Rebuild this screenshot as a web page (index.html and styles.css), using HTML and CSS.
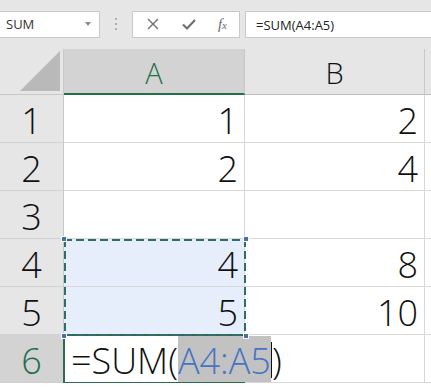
FILE: index.html
```html
<!DOCTYPE html>
<html lang="en">

<head>
    <meta charset="UTF-8">
    <meta name="viewport" content="width=device-width, initial-scale=1.0">
    <title>SUM</title>
    <link rel="stylesheet" href="styles.css">
</head>

<body>
    <div class="toolbar">
        <div class="name-box">
            <span>SUM</span>
            <span class="drop-arrow"></span>
        </div>
        <div class="grip">
            <span></span><span></span><span></span>
        </div>
        <div class="fx-box">
            <svg class="icon" width="14" height="14" viewBox="0 0 14 14">
                <path d="M2 2 L12 12 M12 2 L2 12" stroke="#707070" stroke-width="1.4" fill="none" />
            </svg>
            <svg class="icon" width="16" height="14" viewBox="0 0 16 14">
                <path d="M2 7.5 L6 11.5 L14 3" stroke="#707070" stroke-width="2.2" fill="none" />
            </svg>
            <span class="fx">f<small>x</small></span>
        </div>
        <div class="formula-box">=SUM(A4:A5)</div>
    </div>

    <div class="sheet">
        <div class="corner"><span class="triangle"></span></div>
        <div class="col-head col-active">A</div>
        <div class="col-head">B</div>
        <div class="col-head col-rest"></div>

        <div class="row-head">1</div>
        <div class="cell">1</div>
        <div class="cell">2</div>
        <div class="cell rest"></div>

        <div class="row-head">2</div>
        <div class="cell">2</div>
        <div class="cell">4</div>
        <div class="cell rest"></div>

        <div class="row-head">3</div>
        <div class="cell"></div>
        <div class="cell"></div>
        <div class="cell rest"></div>

        <div class="row-head">4</div>
        <div class="cell picked">4</div>
        <div class="cell">8</div>
        <div class="cell rest"></div>

        <div class="row-head">5</div>
        <div class="cell picked">5</div>
        <div class="cell">10</div>
        <div class="cell rest"></div>

        <div class="row-head row-active">6</div>
        <div class="cell editing">
            <span>=SUM(</span><span class="ref">A4:A5</span><span class="caret"></span><span>)</span>
        </div>
        <div class="cell"></div>
        <div class="cell rest"></div>

        <!-- copy marquee around A4:A5 -->
        <div class="marquee">
            <span class="handle tl"></span>
            <span class="handle tr"></span>
            <span class="handle bl"></span>
            <span class="handle br"></span>
        </div>
    </div>
</body>

</html>
```

FILE: styles.css
```css
* {
    box-sizing: border-box;
}

body {
    margin: 0;
    font-family: 'Open Sans', 'Noto Sans', sans-serif;
    background: white;
    color: #111;
    overflow: hidden;
}

/* formula bar */
.toolbar {
    display: flex;
    align-items: center;
    height: 49px;
    padding-bottom: 1px;
    background-color: #e6e6e6;
}

.name-box {
    display: flex;
    align-items: center;
    justify-content: space-between;
    width: 100px;
    height: 27px;
    padding: 0 8px 0 6px;
    background: white;
    border: 1px solid #c9c9c9;
    border-left: none;
    font-size: 13px;
    color: #333;
}

.drop-arrow {
    width: 0;
    height: 0;
    border-left: 3.5px solid transparent;
    border-right: 3.5px solid transparent;
    border-top: 4px solid #8a8a8a;
}

.grip {
    display: flex;
    flex-direction: column;
    gap: 3px;
    width: 32px;
    align-items: center;
}

.grip span {
    width: 2px;
    height: 2px;
    background-color: #b0b0b0;
}

.fx-box {
    display: flex;
    align-items: center;
    justify-content: space-between;
    width: 108px;
    height: 27px;
    padding: 0 12px 0 13px;
    background: white;
    border: 1px solid #c9c9c9;
}

.icon {
    display: block;
}

.fx {
    font-family: 'Liberation Serif', serif;
    font-style: italic;
    font-size: 15px;
    color: #6b6b6b;
}

.fx small {
    font-size: 11px;
}

.formula-box {
    flex: 1;
    height: 27px;
    margin-left: 5px;
    padding: 4px 10px;
    background: white;
    border: 1px solid #c9c9c9;
    border-right: none;
    font-size: 13px;
    color: #222;
}

/* grid */
.sheet {
    position: relative;
    display: grid;
    grid-template-columns: 64px 181px 180px 1fr;
    grid-template-rows: 46px repeat(6, 48px);
    font-weight: 350;
}

.corner {
    display: flex;
    align-items: flex-end;
    justify-content: flex-end;
    padding: 0 3px 3px 0;
    background-color: #e6e6e6;
    border-right: 1px solid #c8c8c8;
    border-bottom: 1px solid #c8c8c8;
}

.triangle {
    width: 0;
    height: 0;
    border-left: 40px solid transparent;
    border-bottom: 40px solid #b9b9b9;
}

.col-head {
    display: flex;
    align-items: center;
    justify-content: center;
    padding-top: 2px;
    background-color: #e6e6e6;
    border-right: 1px solid #c8c8c8;
    border-bottom: 1px solid #bcbcbc;
    font-size: 29px;
    color: #111;
}

.col-active {
    background-color: #d3d3d3;
    color: #21704a;
    border-bottom: 2px solid #21704a;
}

.col-rest {
    border-right: none;
}

.row-head {
    display: flex;
    align-items: center;
    justify-content: center;
    padding-top: 4px;
    background-color: #e6e6e6;
    border-right: 1px solid #c8c8c8;
    border-bottom: 1px solid #d0d0d0;
    font-size: 36px;
    color: #111;
}

.row-active {
    background-color: #d3d3d3;
    color: #21704a;
}

.cell {
    display: flex;
    align-items: center;
    justify-content: flex-end;
    padding: 4px 6px 0 0;
    border-right: 1px solid #d8d8d8;
    border-bottom: 1px solid #d8d8d8;
    font-size: 36px;
    color: #111;
}

.cell.rest {
    border-right: none;
}

.cell.picked {
    background-color: #e6edfb;
}

.editing {
    justify-content: flex-start;
    align-items: stretch;
    padding: 0 0 0 6px;
    border: 2px solid #2f6a50;
    margin: -1px 0 0 -1px;
    width: 183px;
    height: 50px;
    background: white;
}

.editing span {
    display: flex;
    flex-shrink: 0;
    align-items: center;
    padding-top: 2px;
}

.editing .ref {
    background-color: #c2c2c2;
    color: #4673c2;
}

.editing .caret {
    width: 1px;
    margin: 6px 0 4px;
    padding: 0;
    background-color: #111;
}

.marquee {
    position: absolute;
    left: 64px;
    top: 190px;
    width: 182px;
    height: 97px;
    background:
        repeating-linear-gradient(90deg, #2f6e68 0 8px, transparent 8px 12px) top / 100% 2px no-repeat,
        repeating-linear-gradient(90deg, #2f6e68 0 8px, transparent 8px 12px) bottom / 100% 2px no-repeat,
        repeating-linear-gradient(180deg, #2f6e68 0 8px, transparent 8px 12px) left / 2px 100% no-repeat,
        repeating-linear-gradient(180deg, #2f6e68 0 8px, transparent 8px 12px) right / 2px 100% no-repeat;
    pointer-events: none;
}

.handle {
    position: absolute;
    width: 6px;
    height: 6px;
    background-color: #4a6ea6;
    border: 1px solid white;
}

.handle.tl { left: -3px; top: -3px; }
.handle.tr { right: -3px; top: -3px; }
.handle.bl { left: -3px; bottom: -3px; }
.handle.br { right: -3px; bottom: -3px; }
```
